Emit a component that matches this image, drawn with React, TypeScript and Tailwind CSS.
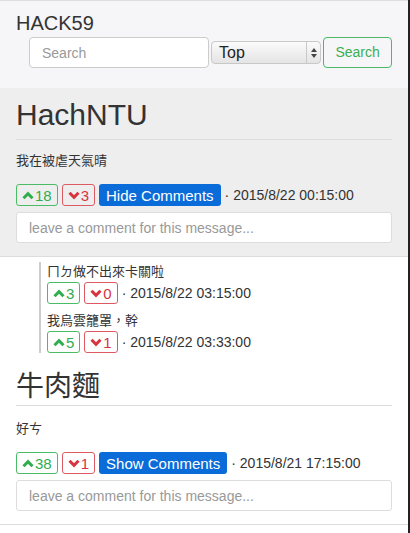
import React from "react";

const FONT = "font-['Liberation_Sans','Noto_Sans_CJK_TC',sans-serif]";

const ChevronUp = () => (
  <svg width="12" height="9" viewBox="0 0 12 9" className="mr-[1px]">
    <path d="M1.5 7.2 L6 2.6 L10.5 7.2" fill="none" stroke="currentColor" strokeWidth="3" strokeLinejoin="miter" />
  </svg>
);

const ChevronDown = () => (
  <svg width="12" height="9" viewBox="0 0 12 9" className="mr-[1px]">
    <path d="M1.5 1.8 L6 6.4 L10.5 1.8" fill="none" stroke="currentColor" strokeWidth="3" strokeLinejoin="miter" />
  </svg>
);

interface VoteProps {
  up: number;
  down: number;
}

const Votes = ({ up, down }: VoteProps) => (
  <>
    <button className="flex items-center h-[22px] px-[5px] border border-[#4cbb66] rounded-[3px] text-[#2fae4f] text-[15px] leading-none">
      <ChevronUp />
      {up}
    </button>
    <button className="flex items-center h-[22px] px-[5px] border border-[#de5a63] rounded-[3px] text-[#d8343f] text-[15px] leading-none">
      <ChevronDown />
      {down}
    </button>
  </>
);

interface PostProps {
  title: string;
  titleClass: string;
  bodyClass: string;
  body: string;
  up: number;
  down: number;
  open: boolean;
  date: string;
  bg: string;
}

const Post = ({ title, titleClass, bodyClass, body, up, down, open, date, bg }: PostProps) => (
  <div className={`${bg} border-b border-[#ddd] px-4 pt-[9px] pb-[13px]`}>
    <h2 className={`${titleClass} text-[#333] border-b border-[#ddd]`}>{title}</h2>
    <p className={`${bodyClass} text-[13px] leading-[18px] text-[#333]`}>{body}</p>
    <div className="mt-[14px] flex items-center gap-[4px]">
      <Votes up={up} down={down} />
      <button className="h-[22px] px-[7px] bg-[#0a6cd8] rounded-[3px] text-white text-[15px] leading-none">
        {open ? "Hide Comments" : "Show Comments"}
      </button>
      <span className="text-[14px] text-[#333]">· {date}</span>
    </div>
    <input
      className="mt-[6px] w-full h-[31px] px-[12px] bg-white border border-[#ddd] rounded-[3px] text-[14px] placeholder:text-[#999] outline-none"
      placeholder="leave a comment for this message..."
    />
  </div>
);

interface CommentProps {
  text: string;
  up: number;
  down: number;
  date: string;
}

const Comment = ({ text, up, down, date }: CommentProps) => (
  <div>
    <p className="text-[13px] leading-[18px] text-[#333]">{text}</p>
    <div className="mt-[1px] flex items-center gap-[4px]">
      <Votes up={up} down={down} />
      <span className="text-[14px] text-[#333]">· {date}</span>
    </div>
  </div>
);

export default function App() {
  return (
    <div className={`${FONT} w-[410px] min-h-[533px] bg-white border-r-2 border-[#222]`}>
      <header className="bg-[#f6f6f8] border-t border-[#ddd] h-[88px] px-4 pt-[10px]">
        <h1 className="text-[20px] leading-[24px] text-[#333]">HACK59</h1>
        <div className="mt-[2px] ml-[13px] flex items-center">
          <input
            className="w-[180px] h-[31px] px-[12px] bg-white border border-[#ccc] rounded-[4px] text-[14px] placeholder:text-[#999] outline-none"
            placeholder="Search"
          />
          <div className="ml-[2px] w-[112px] h-[23px] flex items-center border border-[#c8c8c8] rounded-[4px] bg-gradient-to-b from-[#fbfbfb] to-[#e4e4e4]">
            <span className="flex-1 pl-[7px] text-[16px] text-[#222] leading-none">Top</span>
            <span className="w-[14px] h-full border-l border-[#c8c8c8] flex flex-col items-center justify-center gap-[2px]">
              <span className="w-0 h-0 border-l-[3px] border-r-[3px] border-b-[4px] border-l-transparent border-r-transparent border-b-[#444]" />
              <span className="w-0 h-0 border-l-[3px] border-r-[3px] border-t-[4px] border-l-transparent border-r-transparent border-t-[#444]" />
            </span>
          </div>
          <button className="ml-[2px] w-[70px] h-[31px] border border-[#4cb865] rounded-[4px] text-[#3aae55] text-[14px]">
            Search
          </button>
        </div>
      </header>
      <Post
        title="HachNTU"
        titleClass="text-[30px] leading-[36px] pb-[6px]"
        bodyClass="mt-[12px]"
        body="我在被虐天氣晴"
        up={18}
        down={3}
        open
        date="2015/8/22 00:15:00"
        bg="bg-[#eeeeee]"
      />
      <div className="pl-[39px] pt-[5px] pb-[9px]">
        <div className="border-l-2 border-[#ccc] pl-[6px] pt-[1px] flex flex-col gap-[8px]">
          <Comment text="ㄇㄉ做不出來卡關啦" up={3} down={0} date="2015/8/22 03:15:00" />
          <Comment text="我烏雲籠罩，幹" up={5} down={1} date="2015/8/22 03:33:00" />
        </div>
      </div>
      <Post
        title="牛肉麵"
        titleClass="text-[28px] leading-[32px] pb-[2px]"
        bodyClass="mt-[14px]"
        body="好ㄘ"
        up={38}
        down={1}
        open={false}
        date="2015/8/21 17:15:00"
        bg="bg-white"
      />
    </div>
  );
}
